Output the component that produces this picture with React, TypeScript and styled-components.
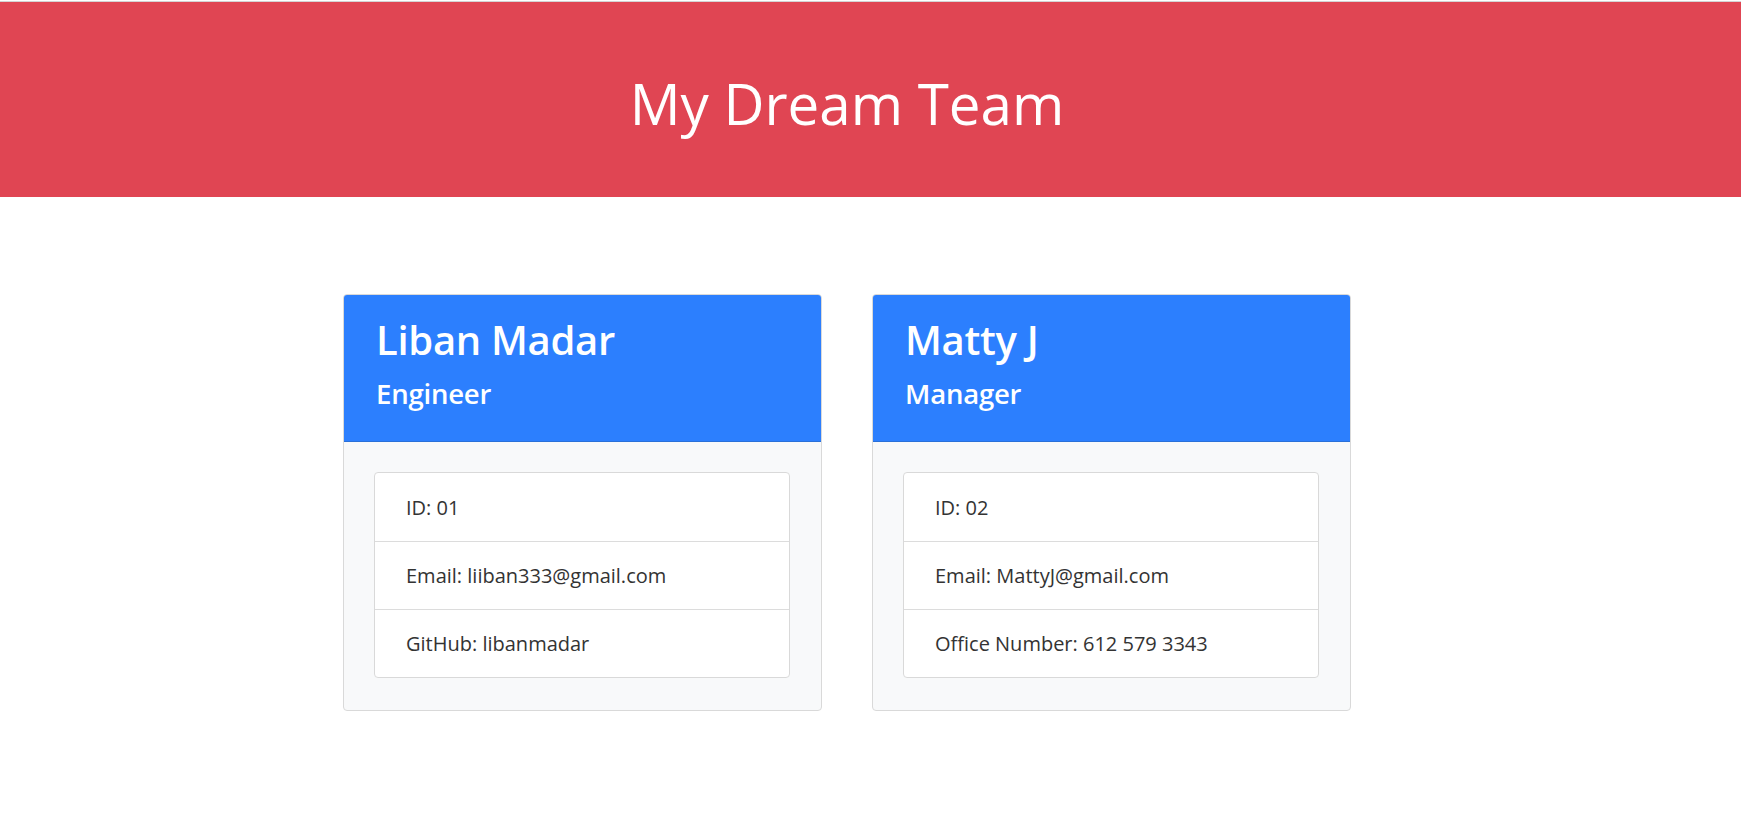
import React from "react";
import styled, { createGlobalStyle } from "styled-components";

const GlobalStyle = createGlobalStyle`
  html, body { margin: 0; padding: 0; background: #ffffff; }
  body { font-family: "Open Sans", "Noto Sans", sans-serif; color: #212529; }
  * { box-sizing: border-box; }
`;

const Page = styled.div`
  padding-top: 1px;
`;

const TopRule = styled.div`
  height: 1px;
  background: #d4d4d4;
`;

const Banner = styled.header`
  height: 195px;
  background: #e04553;
  display: flex;
  align-items: center;
  justify-content: center;
  padding: 8px 47px 0 0;
`;

const Title = styled.h1`
  margin: 0;
  color: #ffffff;
  font-weight: 400;
  font-size: 56.5px;
  line-height: 1.2;
`;

const Main = styled.main`
  display: flex;
  justify-content: center;
  gap: 50px;
  padding: 97px 47px 0 0;
`;

const Card = styled.section`
  width: 479px;
  border: 1px solid #d9d9d9;
  border-radius: 4px;
  overflow: hidden;
  background: #f8f9fa;
`;

const CardHeader = styled.div`
  background: #2c7ffe;
  border-bottom: 1px solid #2a70d8;
  height: 147px;
  padding: 18px 32px 0;
  color: #ffffff;
`;

const Name = styled.h2`
  margin: 0;
  font-size: 40px;
  font-weight: 600;
  line-height: 54px;
  letter-spacing: -0.3px;
`;

const Role = styled.h3`
  margin: 3px 0 0;
  font-size: 27.5px;
  font-weight: 600;
  line-height: 48px;
  letter-spacing: -0.2px;
`;

const CardBody = styled.div`
  padding: 30px 31px 32px 30px;
`;

const List = styled.ul`
  list-style: none;
  margin: 0;
  padding: 0;
  background: #ffffff;
  border: 1px solid #d9d9d9;
  border-radius: 4px;
`;

const Item = styled.li`
  height: 68px;
  display: flex;
  align-items: center;
  padding: 0 31px;
  font-size: 20px;
  color: #333333;
  & + & {
    border-top: 1px solid #dcdcdc;
  }
`;

type Member = { name: string; role: string; details: string[] };

const team: Member[] = [
  {
    name: "Liban Madar",
    role: "Engineer",
    details: ["ID: 01", "Email: liiban333@gmail.com", "GitHub: libanmadar"],
  },
  {
    name: "Matty J",
    role: "Manager",
    details: ["ID: 02", "Email: MattyJ@gmail.com", "Office Number: 612 579 3343"],
  },
];

export default function App() {
  return (
    <Page>
      <GlobalStyle />
      <TopRule />
      <Banner>
        <Title>My Dream Team</Title>
      </Banner>
      <Main>
        {team.map((m) => (
          <Card key={m.name}>
            <CardHeader>
              <Name>{m.name}</Name>
              <Role>{m.role}</Role>
            </CardHeader>
            <CardBody>
              <List>
                {m.details.map((d) => (
                  <Item key={d}>{d}</Item>
                ))}
              </List>
            </CardBody>
          </Card>
        ))}
      </Main>
    </Page>
  );
}
